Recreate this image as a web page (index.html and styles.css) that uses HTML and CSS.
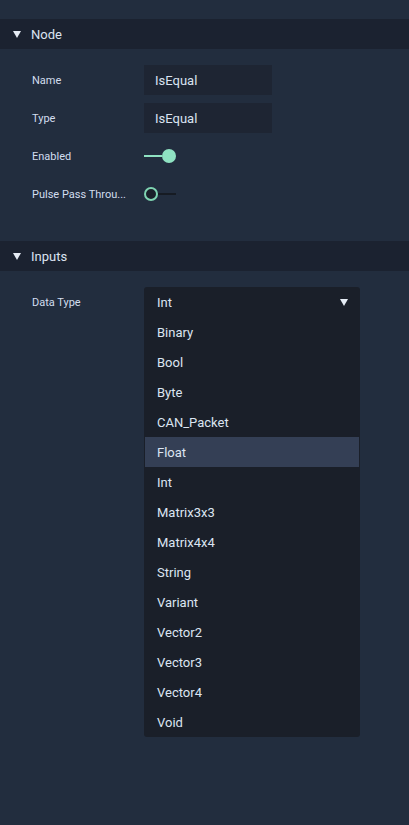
FILE: index.html
```html
<!DOCTYPE html>
<html>
<head>
<meta charset="utf-8">
<link rel="stylesheet" href="styles.css">
</head>
<body>
<div class="panel">
  <section class="section">
    <div class="section-header"><span class="caret"></span>Node</div>
    <div class="section-body">
      <div class="row">
        <div class="label">Name</div>
        <div class="field">IsEqual</div>
      </div>
      <div class="row">
        <div class="label">Type</div>
        <div class="field">IsEqual</div>
      </div>
      <div class="row">
        <div class="label">Enabled</div>
        <div class="toggle on"><span class="track"></span><span class="knob"></span></div>
      </div>
      <div class="row">
        <div class="label">Pulse Pass Throu...</div>
        <div class="toggle off"><span class="knob"></span><span class="track"></span></div>
      </div>
    </div>
  </section>
  <section class="section">
    <div class="section-header"><span class="caret"></span>Inputs</div>
    <div class="section-body">
      <div class="row">
        <div class="label">Data Type</div>
        <div class="select">
          <div class="select-value"><span>Int</span><span class="arrow"></span></div>
          <ul class="menu">
            <li>Binary</li>
            <li>Bool</li>
            <li>Byte</li>
            <li>CAN_Packet</li>
            <li class="active">Float</li>
            <li>Int</li>
            <li>Matrix3x3</li>
            <li>Matrix4x4</li>
            <li>String</li>
            <li>Variant</li>
            <li>Vector2</li>
            <li>Vector3</li>
            <li>Vector4</li>
            <li>Void</li>
          </ul>
        </div>
      </div>
    </div>
  </section>
</div>
</body>
</html>
```

FILE: styles.css
```css
* { box-sizing: border-box; }
html, body {
  margin: 0;
  padding: 0;
  background: #222d3e;
  height: 100%;
}
body {
  font-family: Roboto, "Liberation Sans", sans-serif;
  color: #d4dff0;
}
.panel {
  padding-top: 19px;
}
.section {
  margin-bottom: 32px;
}
.section-header {
  height: 30px;
  background: #1b2230;
  display: flex;
  align-items: center;
  padding-left: 13px;
  font-size: 13px;
  color: #dbe4f2;
}
.caret {
  width: 0;
  height: 0;
  border-left: 4px solid transparent;
  border-right: 4px solid transparent;
  border-top: 7px solid #e6ecf5;
  margin-right: 10px;
  margin-top: 1px;
}
.section-body {
  padding: 16px 0 0 32px;
  display: flex;
  flex-direction: column;
  gap: 8px;
}
.row {
  display: flex;
  align-items: center;
  height: 30px;
}
.label {
  width: 112px;
  font-size: 11px;
  color: #d2ddee;
  white-space: nowrap;
}
.field {
  width: 128px;
  height: 30px;
  background: #1e2533;
  display: flex;
  align-items: center;
  padding-left: 11px;
  font-size: 13px;
  color: #dae3f1;
}
.toggle {
  display: flex;
  align-items: center;
  width: 32px;
  height: 14px;
}
.toggle .track {
  display: block;
  height: 2px;
  width: 18px;
}
.toggle.on .track { background: #8fe2c2; }
.toggle.on .knob {
  width: 14px;
  height: 14px;
  border-radius: 50%;
  background: #8fe2c2;
}
.toggle.off .knob {
  width: 14px;
  height: 14px;
  border-radius: 50%;
  border: 2px solid #7fd4b2;
  background: #1a202a;
}
.toggle.off .track { background: #161b23; }
.select {
  position: relative;
  width: 216px;
  height: 30px;
}
.select-value {
  height: 30px;
  background: #1a1f29;
  border-radius: 3px 3px 0 0;
  display: flex;
  align-items: center;
  justify-content: space-between;
  padding: 0 12px 0 13px;
  font-size: 13px;
  color: #dce5f2;
}
.arrow {
  width: 0;
  height: 0;
  border-left: 4px solid transparent;
  border-right: 4px solid transparent;
  border-top: 7px solid #e6ecf5;
}
.menu {
  position: absolute;
  top: 30px;
  left: 0;
  width: 216px;
  margin: 0;
  padding: 0 1px 0 1px;
  list-style: none;
  background: #1a1f29;
  border-radius: 0 0 3px 3px;
  z-index: 2;
}
.menu li {
  height: 30px;
  display: flex;
  align-items: center;
  padding-left: 12px;
  font-size: 13px;
  color: #dce5f2;
}
.menu li.active {
  background: #343f55;
}
```
